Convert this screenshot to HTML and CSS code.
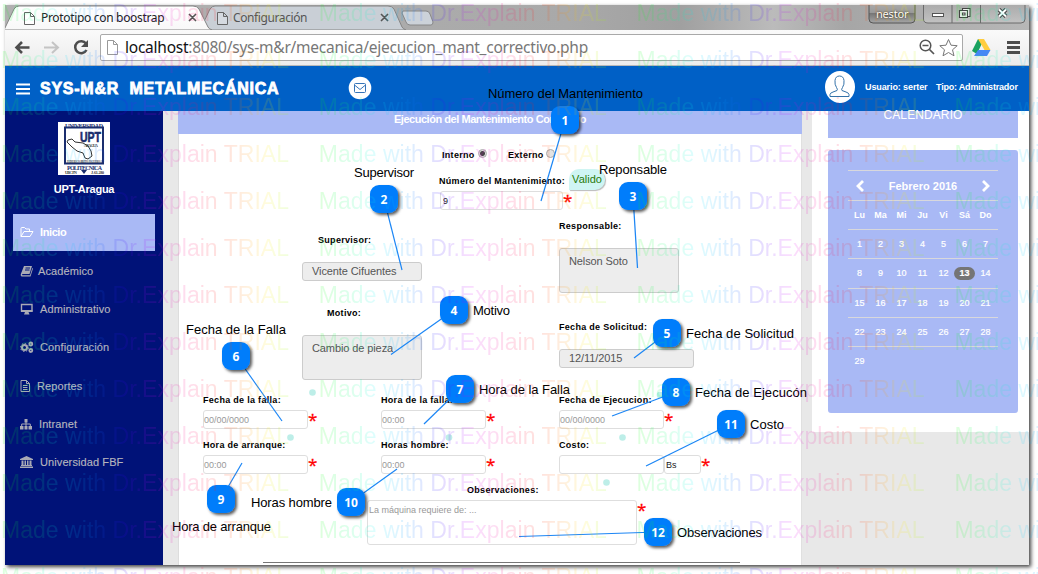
FILE: index.html
```html
<!DOCTYPE html>
<html lang="es">
<head>
<meta charset="utf-8">
<title>Prototipo con boostrap</title>
<link rel="stylesheet" href="styles.css">
</head>
<body>
<div class="window">
  <div class="tabbar">
    <svg class="tabs" width="1024" height="25" viewBox="0 0 1024 25">
      <defs>
        <linearGradient id="tab" x1="0" y1="0" x2="0" y2="1"><stop offset="0" stop-color="#fff"/><stop offset="1" stop-color="#f8f8f8"/></linearGradient>
        <linearGradient id="btn" x1="0" y1="0" x2="0" y2="1"><stop offset="0" stop-color="#aaa"/><stop offset="1" stop-color="#c2c2c2"/></linearGradient>
        <linearGradient id="usr" x1="0" y1="0" x2="0" y2="1"><stop offset="0" stop-color="#aaa"/><stop offset=".45" stop-color="#999"/><stop offset=".5" stop-color="#777"/><stop offset="1" stop-color="#a5a5a5"/></linearGradient>
      </defs>
      <path d="M195 25 L205 4 Q207 1 210 1 H383 Q387 1 389 4 L397 22 Q398 24 401 25 Z" fill="#c9cfd6" stroke="#858585"/>
      <path d="M-1 25 L9 4 Q11 1 14 1 H188 Q192 1 194 4 L203 22 Q204 24 207 25 Z" fill="url(#tab)" stroke="#858585"/>
      <path d="M398 6 H421 Q424 6 425 9 L428 17 Q428 20 426 20 H405 Q402 20 401 17 L397 8 Z" fill="#ccd2d9" stroke="#888"/>
      <g fill="#fff" stroke="#666"><path d="M19.500 7.500h6l4 4v8h-10zM25.500 7.500v4h4"/><path d="M212.500 7.500h6l4 4v8h-10zM218.500 7.500v4h4" fill="#d5dae0"/></g>
      <path d="M184 9l7 7M191 9l-7 7M376 9l7 7M383 9l-7 7" stroke="#555" stroke-width="1.6" fill="none"/>
      <path d="M864 -1V14Q864 18 868 18H906Q910 18 910 14V-1z" fill="url(#usr)" stroke="#555"/>
      <path d="M918.500 -1V14Q918.500 18 923 18H1016Q1020 18 1020 14V-1zM947 0V18M975.500 0V18" fill="url(#btn)" stroke="#6b6b6b"/>
      <rect x="927.500" y="8.500" width="11" height="3" fill="#fff" stroke="#555"/>
      <path d="M957.500 5.500v-2h7.500v8h-2M954.500 5.500h8v7h-8zM957.500 8h2.500v2h-2.500z" fill="#eee" stroke="#444" stroke-width="1.1"/>
      <path d="M994 4.500l7 7M1001 4.500l-7 7" stroke="#444" stroke-width="4"/><path d="M994 4.500l7 7M1001 4.500l-7 7" stroke="#fff" stroke-width="2"/>
    </svg>
    <span class="tab-title first">Prototipo con boostrap</span>
    <span class="tab-title second">Configuración</span>
    <span class="win-user">nestor</span>
  </div>
  <div class="toolbar">
    <svg width="93" height="36" viewBox="5 30 93 36" fill="none" stroke="#4d4d4d" stroke-width="2.600">
      <path d="M29.500 47.500H17M22 42l-5.500 5.500L22 53"/><path d="M44 47.500h13M52 42l6 5.500-6 5.500" stroke="#c4c4c4" stroke-width="2"/>
      <path d="M86 43.500a6 6 0 1 0 .5 6.500" stroke-width="2.500"/><path d="M88 40v7h-7z" fill="#4d4d4d" stroke="none"/>
    </svg>
    <div class="address">
      <svg width="24" height="24" viewBox="0 0 24 24" fill="#fff" stroke="#999"><path d="M6.500 5.500h6l4 4v10h-10zM12.500 5.500v4h4"/></svg>
      <span class="url">localhost<i>:8080/sys-m&amp;r/mecanica/ejecucion_mant_correctivo.php</i></span>
      <svg class="addr-icons" width="46" height="24" viewBox="915 35 46 24" fill="none" stroke="#555">
        <circle cx="924.500" cy="45.500" r="5.300" stroke-width="1.500"/><path d="M921.500 45.500h6M928.500 49.500l4.500 4.500" stroke-width="1.700"/>
        <path d="M947.500 39.500l2.500 5.700 6.200.500-4.700 4.100 1.500 6-5.500-3.300-5.500 3.300 1.500-6-4.700-4.100 6.200-.500z" stroke="#777"/>
      </svg>
    </div>
    <svg class="ext" width="66" height="36" viewBox="963 30 66 36">
      <path d="M978 39h6l-7 15-5-3z" fill="#19a15f"/><path d="M978 39h6l6.500 11h-6z" fill="#ffcd40"/><path d="M978 50h12.500l-3.500 6h-13z" fill="#4688f4"/>
      <path d="M1007 42.500h13M1007 47.500h13M1007 52.500h13" stroke="#4d4d4d" stroke-width="3"/>
    </svg>
  </div>
  <header class="topbar">
    <svg class="burger" width="14" height="12" viewBox="0 0 14 12"><path d="M0 1.500h14M0 6h14M0 10.500h14" stroke="#fff" stroke-width="2"/></svg>
    <span class="brand">SYS-M&amp;R&nbsp; METALMECÁNICA</span>
    <svg class="mail" width="24" height="24" viewBox="0 0 24 24"><circle cx="12" cy="12" r="11.300" fill="#fff"/><path d="M6.500 8.500q0-1 1-1h9q1 0 1 1v7q0 1-1 1h-9q-1 0-1-1zM6.500 9l5.500 4.500L17.500 9" fill="none" stroke="#3674b8"/></svg>
    <svg class="avatar" width="32" height="34" viewBox="0 0 32 34"><ellipse cx="16" cy="17" rx="15" ry="16" fill="#fff"/><path d="M6 26.500v-2q0-1.500 3-2.500l4-1.500q1-1-.5-3-2-3-1.500-7 .5-4.500 4.500-4.500t4.500 4.500q.5 4-1.500 7-1.500 2-.5 3l4 1.500q3 1 3 2.500v2z" fill="#fff" stroke="#3472a9"/></svg>
    <span class="who">Usuario: serter</span><span class="role">Tipo: Administrador</span>
  </header>
  <div class="body">
    <nav class="sidebar">
      <svg class="crest" width="52" height="53" viewBox="0 0 52 53">
        <rect width="52" height="53" fill="#fff"/>
        <path d="M7 5.500h38v36H7z" fill="#fff" stroke="#1b2e6e" stroke-width="2"/>
        <text x="7" y="5.500" textLength="38" font-size="6">UNIVERSIDAD</text>
        <text x="22" y="19.500" textLength="21" lengthAdjust="spacingAndGlyphs" font-size="14" class="upt">UPT</text>
        <path d="M10 18l4-1 3 3 8 1 5 3 3 5 1 5-4 3-3-1-2-5-6-2-5-4-3-3-2-2z" fill="#fff" stroke="#333"/>
        <text x="26" y="24.500" textLength="14" font-size="4" class="blk">ARAGUA</text>
        <text x="9" y="41" textLength="35" lengthAdjust="spacingAndGlyphs" font-size="4" class="blk">FEDERICO BRITO FIGUEROA</text>
        <text x="9" y="47.500" textLength="35" font-size="6">POLITECNICA</text>
        <text x="7" y="52" textLength="12" font-size="4" class="blk">UBC PN</text><text x="33" y="52" textLength="13" font-size="4" class="blk">J-61.280</text>
        <path d="M23 48h6l-3 4z" fill="#1b2e6e"/>
      </svg>
      <div class="school">UPT-Aragua</div>
      <a class="item active"><svg viewBox="0 0 14 12" fill="none" stroke="#fff"><path d="M1 10.500V2.500q0-1 1-1h2.500l1.500 1.500h3.500v2M1 10.500L4 5.500h9l-3 5z"/></svg><span>Inicio</span></a>
      <a class="item book"><svg viewBox="0 0 14 12" fill="#a9aab5"><path d="M4 1h8l-2.500 8H2.500q-1 1 0 1.300h7.500l2.300-7.300.7.500-2.500 8H2Q0 11 1 8.500z"/><path d="M5.500 3h4.500M5 5h4.500" stroke="#001278"/></svg><span>Académico</span></a>
      <a class="item"><svg viewBox="0 0 14 12"><path d="M1.500 1.500h10.500v6.500H1.500z" fill="none" stroke="#a9aab5" stroke-width="1.400"/><path d="M1 7h11.500v2H1zM5 9h3.500l1 2.500h-5.500z" fill="#a9aab5"/></svg><span>Administrativo</span></a>
      <a class="item"><svg viewBox="0 0 14 12" fill="none" stroke="#a9aab5"><circle cx="4.500" cy="6.500" r="2.500" stroke-width="2"/><circle cx="4.500" cy="6.500" r="4" stroke-dasharray="1.500 1.600"/><circle cx="10.800" cy="3" r="1.500" stroke-width="1.800"/><circle cx="10.800" cy="9.500" r="1.500" stroke-width="1.800"/></svg><span>Configuración</span></a>
      <a class="item rep"><svg viewBox="0 0 14 12" fill="none" stroke="#a9aab5"><path d="M1 .500h5.500l3 3v8H1zM6.500.500v3h3M3 5.500h4.500M3 7.500h4.500M3 9.500h4.500"/></svg><span>Reportes</span></a>
      <a class="item intra"><svg viewBox="0 0 14 12" fill="#a9aab5"><path d="M4.500 1h3v3.500h-3zM0 8h3.500v3.500H0zM4.500 8h3v3.500h-3zM8.500 8H12v3.500H8.500z"/><path d="M6 4v4M1.700 8.500V6h8.600v2.500" fill="none" stroke="#a9aab5"/></svg><span>Intranet</span></a>
      <a class="item"><svg viewBox="0 0 14 12" fill="#a9aab5"><path d="M6.500 0L13 3v1H0V3zM1.500 4.500h2V9h-2zM4.500 4.500h1.500V9H4.500zM7 4.500h1.500V9H7zM9.500 4.500h2V9h-2zM1 9h11v1H1zM0 10.500h13V12H0z"/></svg><span>Universidad FBF</span></a>
    </nav>
    <main class="card">
      <h1>Ejecución del Mantenimiento Correctivo</h1>
      <div class="kind"><b class="l-int">Interno</b><u class="radio on"></u><b class="l-ext">Externo</b><u class="radio"></u></div>
      <div class="number-label"><b>Número del Mantenimiento:</b><span class="valid">Valido</span></div>
      <div class="number-row"><div class="input">9</div><em>*</em></div>
      <div class="details">
        <div class="left">
          <b class="sup">Supervisor:</b><div class="ro">Vicente Cifuentes</div>
          <b class="mot">Motivo:</b><div class="ro tall">Cambio de pieza</div>
        </div>
        <div class="right">
          <b>Responsable:</b><div class="ro tall">Nelson Soto</div>
          <b class="sol">Fecha de Solicitud:</b><div class="ro date">12/11/2015</div>
        </div>
      </div>
      <div class="fields">
        <div><b>Fecha de la falla:</b><p><span class="input ph">00/00/0000</span><em>*</em></p></div>
        <div><b>Hora de la falla:</b><p><span class="input ph">00:00</span><em>*</em></p></div>
        <div><b>Fecha de Ejecucion:</b><p><span class="input ph">00/00/0000</span><em>*</em></p></div>
        <div><b>Hora de arranque:</b><p><span class="input ph">00:00</span><em>*</em></p></div>
        <div><b>Horas hombre:</b><p><span class="input ph">00:00</span><em>*</em></p></div>
        <div><b>Costo:</b><p><span class="input"></span><span class="input unit">Bs</span><em>*</em></p></div>
      </div>
      <b class="obs">Observaciones:</b>
      <div class="obs-row"><div class="input area">La máquina requiere de: ...</div><em>*</em></div>
      <hr>
    </main>
    <aside>
      <h2>CALENDARIO</h2>
      <section class="calendar">
        <div class="month"><svg width="8" height="12" viewBox="0 0 8 12"><path d="M7 1L2 6l5 5" fill="none" stroke="#fff" stroke-width="2.800"/></svg><span>Febrero 2016</span><svg width="8" height="12" viewBox="0 0 8 12"><path d="M1 1l5 5-5 5" fill="none" stroke="#fff" stroke-width="2.800"/></svg></div>
        <div class="week head"><span>Lu</span><span>Ma</span><span>Mi</span><span>Ju</span><span>Vi</span><span>Sá</span><span>Do</span></div>
        <div class="week"><span>1</span><span>2</span><span>3</span><span>4</span><span>5</span><span>6</span><span>7</span></div>
        <div class="week"><span>8</span><span>9</span><span>10</span><span>11</span><span>12</span><span class="today">13</span><span>14</span></div>
        <div class="week"><span>15</span><span>16</span><span>17</span><span>18</span><span>19</span><span>20</span><span>21</span></div>
        <div class="week"><span>22</span><span>23</span><span>24</span><span>25</span><span>26</span><span>27</span><span>28</span></div>
        <div class="week"><span>29</span></div>
      </section>
    </aside>
  </div>
</div>
<svg class="overlay" id="overlay" width="1038" height="574" viewBox="0 0 1038 574">
  <defs>
    <filter id="sh" x="-30%" y="-30%" width="180%" height="180%"><feDropShadow dx="2" dy="2" stdDeviation="1.500" flood-color="#000" flood-opacity=".65"/></filter>
    <linearGradient id="rainbow" gradientUnits="userSpaceOnUse" x1="0" y1="0" x2="290" y2="0">
      <stop offset="0" stop-color="#0f0"/><stop offset=".13" stop-color="#00ff90"/><stop offset=".2" stop-color="#00f0ff"/><stop offset=".3" stop-color="#09f"/><stop offset=".42" stop-color="#30f"/><stop offset=".53" stop-color="#d0f"/><stop offset=".65" stop-color="#ff0070"/><stop offset=".76" stop-color="#ff2000"/><stop offset=".84" stop-color="#f80"/><stop offset=".92" stop-color="#fe0"/><stop offset="1" stop-color="#8f0"/>
    </linearGradient>
  </defs>
</svg>
<script src="overlay.js"></script>
</body>
</html>
```
FILE: styles.css
```css
* { box-sizing: border-box; }
body { margin: 0; padding: 5px 0 0 5px; width: 1038px; height: 574px; overflow: hidden; background: #fff; font-family: "Liberation Sans", Arial, sans-serif; position: relative; }
.window { width: 1024px; height: 560px; overflow: hidden; background: #e8e8e8; box-shadow: 2px 2px 4px rgba(0,0,0,.75); display: flex; flex-direction: column; }
svg { display: block; flex: none; }
.tabbar { height: 25px; flex: none; position: relative; background: linear-gradient(90deg, #b1b1b1, #a9a9a9 55%, #a0a0a0 66%, #bbb 75%, #a6a6a6 82%, #b7b7b7); }
.tab-title, .win-user { position: absolute; font: 12px/16px "Noto Sans", sans-serif; white-space: nowrap; color: #222; top: 5px; }
.first { left: 36px; letter-spacing: -.32px; }
.second { left: 228px; color: #555; letter-spacing: -.4px; }
.win-user { left: 871px; top: 1px; color: #fff; font-size: 11px; letter-spacing: -.2px; text-shadow: 0 0 2px #222; }
.toolbar { height: 36px; flex: none; display: flex; background: linear-gradient(#fafafa, #ececec); border-bottom: 1px solid #b9b9b9; }
.address { margin: 4px 0 0 2px; width: 863px; height: 27px; border: 1px solid #a9a9a9; border-radius: 2px; background: #fff; display: flex; }
.url { font: 15.5px/24px "Noto Sans", sans-serif; color: #111; white-space: nowrap; letter-spacing: -.24px; }
.url i { font-style: normal; color: #777; }
.addr-icons { margin-left: auto; }
.topbar { height: 45px; flex: none; background: #0060c6; display: flex; align-items: center; color: #fff; font-weight: bold; white-space: nowrap; }
.burger { margin-left: 11px; }
.brand { width: 240px; margin-left: 10px; font: 900 16px "Liberation Sans", sans-serif; letter-spacing: .75px; -webkit-text-stroke: .8px #fff; }
.mail { margin-left: 68px; margin-top: -1px; }
.avatar { margin-left: 452px; margin-top: -4px; }
.who, .role { font-size: 9px; letter-spacing: -.1px; margin-top: -3px; }
.who { width: 63px; margin-left: 9px; }
.role { margin-left: 8px; letter-spacing: -.2px; }
.body { flex: 1; display: flex; align-items: flex-start; }
.sidebar { width: 158px; height: 454px; background: #001278; padding: 11px 8px 0; color: #b5b5bd; }
.crest { margin-left: 45px; }
.crest text { font-family: "Liberation Serif", serif; font-weight: bold; fill: #1b2e6e; }
.crest .upt { font-family: "Liberation Sans", sans-serif; stroke: #1b2e6e; stroke-width: .6; }
.crest .blk { fill: #333; }
.school { text-align: center; color: #fff; font: bold 11px/14px "Liberation Sans", sans-serif; letter-spacing: -.25px; margin: 7px 0 18px; }
.item { display: flex; align-items: center; height: 38.2px; padding-left: 7px; font-size: 11px; letter-spacing: .1px; -webkit-text-stroke: .15px #b5b5bd; }
.item svg { width: 14px; height: 12px; margin-right: 6px; }
.item.book svg { margin-right: 4px; }
.item.intra svg { margin-right: 5px; }
.item.rep svg { margin-right: 3px; }
.item.active { background: #a9b9f5; color: #fff; font-weight: bold; height: 37px; margin-bottom: 1px; padding-bottom: 2px; letter-spacing: -.4px; -webkit-text-stroke: 0; }
.card { width: 624px; height: 454px; margin-left: 15px; background: #fff; border-left: 1px solid #ddd; border-right: 1px solid #e0e0e0; }
h1 { margin: 0 -1px; height: 23px; background: #a9b9f5; color: #fff; font: bold 11px/17px "Liberation Sans", sans-serif; letter-spacing: -.46px; text-align: center; }
.card b { display: block; font: bold 9px/12px "Liberation Sans", sans-serif; letter-spacing: .3px; color: #000; white-space: nowrap; }
.card em { font: 17px/20px "Open Sans", sans-serif; -webkit-text-stroke: .3px red; color: red; width: 11px; height: 18px; }
.kind { display: flex; height: 35px; padding: 15px 0 0 263px; }
.kind .l-int { width: 36px; }
.kind .l-ext { width: 38px; margin-left: 21px; }
.radio { width: 9px; height: 9px; border: 1px solid #aaa; border-radius: 50%; background: #e3e3e3; }
.radio.on { background: radial-gradient(#444 0 2px, #ddd 3px); }
.number-label { display: flex; height: 22px; padding-left: 260px; }
.number-label b { width: 130px; padding-top: 6px; }
.valid { width: 36px; height: 21px; background: #cff5f3; border-radius: 10px 10px 10px 0; color: #287b0a; font-size: 11px; line-height: 21px; text-align: center; box-shadow: 1px 1px 1px #bbb; }
.number-row { display: flex; padding-left: 261px; }
.input { display: block; width: 105px; height: 19px; border: 1px solid #dedede; border-radius: 3px; font-size: 9px; line-height: 18px; color: #222; padding-left: 1px; white-space: nowrap; }
.number-row .input { width: 123px; padding-left: 2px; }
.ph { color: #999; padding-left: 0; }
.details { display: flex; height: 175px; padding-left: 123px; margin-top: 8px; }
.left { width: 257px; padding-top: 16px; }
.ro { width: 120px; height: 19px; border: 1px solid #ccc; border-radius: 3px; background: #ededed; color: #555; font-size: 11px; line-height: 17px; letter-spacing: -.1px; padding-left: 9px; white-space: nowrap; }
.ro.tall { height: 45px; padding-top: 4px; }
.ro.date { width: 135px; }
.details .sup { padding-left: 16px; height: 28px; }
.details .mot { margin: 26px 0 0; padding-left: 25px; height: 28px; }
.right b { height: 28px; margin-top: 2px; }
.right .sol { margin-top: 28px; }
.fields { display: grid; grid-template-columns: repeat(3, 178px); grid-auto-rows: 45px; padding-left: 24px; }
.fields b { height: 17px; padding-top: 1px; }
.fields p { margin: 0; display: flex; }
.unit { width: 37px; }
.obs { padding-left: 288px; height: 17px; }
.card .obs { padding-top: 1px; }
.obs-row { display: flex; padding-left: 188px; }
.obs-row .area { width: 270px; height: 45px; color: #999; }
hr { margin: 17px 61px 0 84px; border: 0; border-top: 1px solid #777; }
aside { margin-left: 10px; width: 217px; height: 321px; background: #fff; padding-left: 16px; }
h2 { margin: 0 0 12px; width: 190px; height: 27px; background: #a9b9f5; color: #fff; font: 12px/9px "Liberation Sans", sans-serif; letter-spacing: .1px; text-align: center; }
.calendar { width: 190px; height: 263px; border-radius: 3px; background: #a9b9f5; padding: 20px; color: #fff; font-weight: bold; }
.month { display: flex; justify-content: space-between; align-items: center; height: 30px; padding: 0 8px; border-top: 1px solid #d8d8dc; font-size: 11px; }
.week { display: grid; grid-template-columns: repeat(7, 21px); height: 29.200px; border-top: 1px solid #d8d8dc; font-size: 9px; line-height: 28px; text-align: center; font-weight: normal; -webkit-text-stroke: .2px #fff; padding-left: 1px; }
.week.head { font-weight: bold; -webkit-text-stroke: 0; }
.today { background: #757575; height: 13px; line-height: 13px; border-radius: 7px; margin-top: 8px; font-weight: bold; }
.overlay { position: absolute; left: 0; top: 0; pointer-events: none; }
.note { font: 13px "Liberation Sans", sans-serif; fill: #000; }
.num { font: bold 12px "Open Sans", sans-serif; fill: #fff; text-anchor: middle; }
.wm { font: 23px "Liberation Sans", sans-serif; fill: url(#rainbow); opacity: .13; }
```
FILE: overlay.js
```js
const svg = document.getElementById('overlay');
function add(tag, attrs, text) {
  const el = document.createElementNS('http://www.w3.org/2000/svg', tag);
  for (const k in attrs) el.setAttribute(k, attrs[k]);
  if (text) el.textContent = text;
  svg.appendChild(el);
}
// Field status dots
[[312.5, 392.5], [290.5, 437.500], [449, 437.500], [622.5, 437.500], [606.5, 482.500], [660, 395]].forEach(([x, y]) =>
  add('circle', {cx: x, cy: y, r: 3.300, fill: '#bdeee8'}));
// number, bubble centre, pointer end, label, label x, baseline, label width
const notes = [
  [1, 565, 120, 541, 201, 'Número del Mantenimiento', 488, 98, 155],
  [2, 384, 199, 402, 270, 'Supervisor', 354, 177, 60],
  [3, 633, 196, 637.5, 268, 'Reponsable', 599, 174, 68],
  [4, 454, 310, 391, 354.5, 'Motivo', 473, 315, 37],
  [5, 667, 333, 634, 358, 'Fecha de Solicitud', 686, 338, 108],
  [6, 236, 356, 282, 421, 'Fecha de la Falla', 186, 334, 100],
  [7, 460, 389, 424, 424, 'Hora de la Falla', 479, 394, 91],
  [8, 676, 392, 612, 416, 'Fecha de Ejecucón', 695, 397, 112],
  [9, 221, 499, 242, 463, 'Hora de arranque', 172, 531, 99],
  [10, 351, 502, 397, 469, 'Horas hombre', 251, 507, 81],
  [11, 731, 424, 646, 466, 'Costo', 750, 429, 34],
  [12, 658, 532, 519, 536.5, 'Observaciones', 677, 537, 85]
];
notes.forEach(([n, x, y, tx, ty, label, lx, ly, w]) => {
  add('line', {x1: x, y1: y, x2: tx, y2: ty, stroke: '#1c86f5', 'stroke-width': 1.200});
  add('rect', {x: x - 14, y: y - 14, width: 28, height: 28, rx: 9, fill: '#007dfb', filter: 'url(#sh)'});
  add('text', {class: 'num', x: x, y: y + 4.500}, String(n));
  add('text', {class: 'note', x: lx, y: ly, textLength: w}, label);
});
// Repeating trial stamp
for (let y = 21; y < 600; y += 47)
  for (let i = 0; i < 4; i++)
    add('text', {class: 'wm', x: 0, y: 0, textLength: 288, transform: `translate(${1 + i * 317.8} ${y})`}, 'Made with Dr.Explain TRIAL');
```
